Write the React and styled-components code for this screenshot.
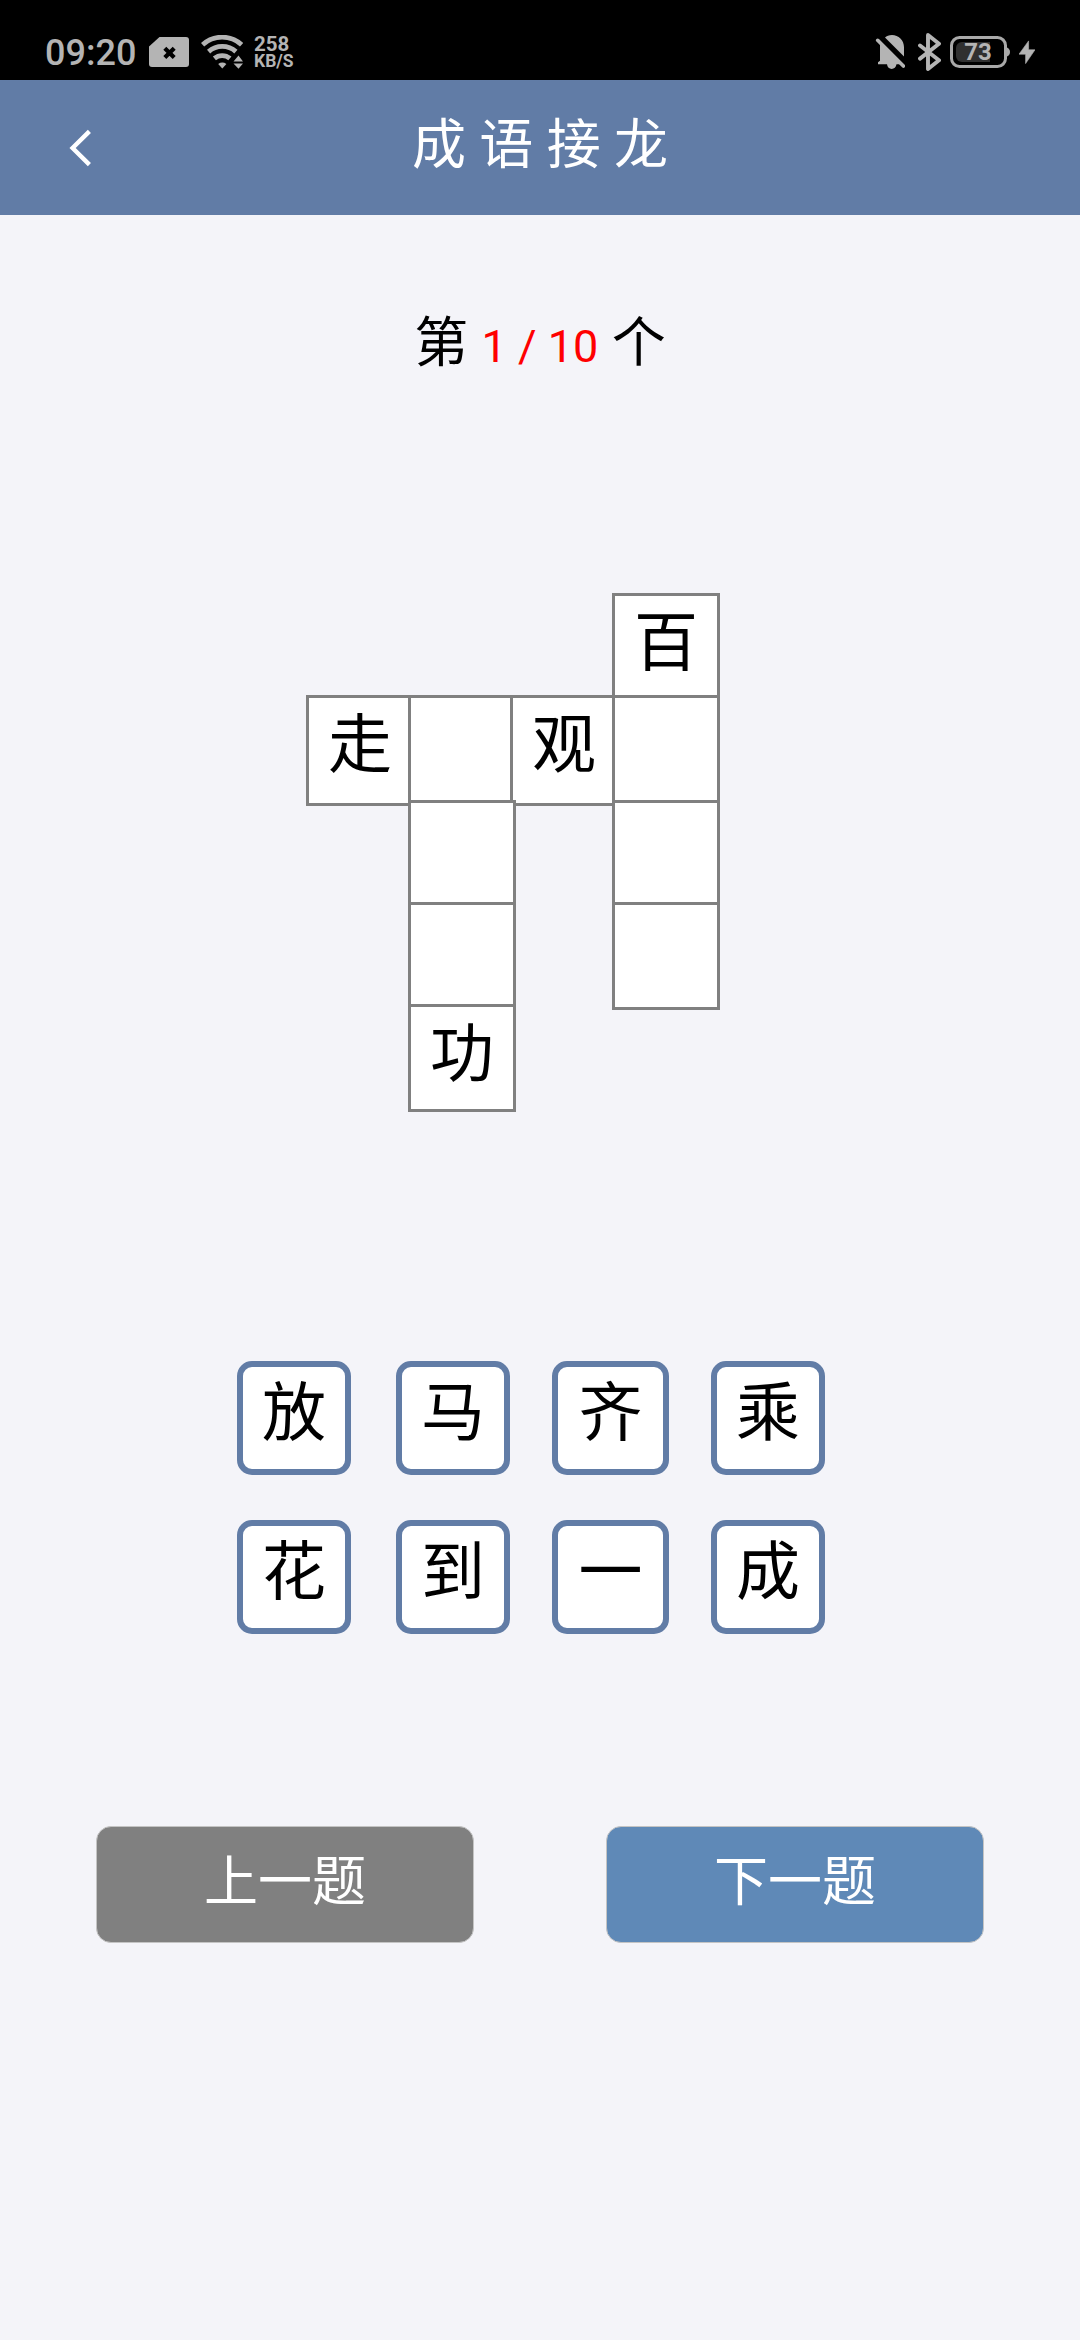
import React from "react";
import styled, { createGlobalStyle } from "styled-components";

const Global = createGlobalStyle`
  html, body { margin: 0; background: #f4f4f9; }
  * { box-sizing: border-box; }
  body { font-family: Roboto, "Noto Sans CJK SC", sans-serif; color: #000; }
  svg { display: block; flex: none; }
`;

const Screen = styled.div`
  width: 1080px;
  height: 2340px;
  display: flex;
  flex-direction: column;
  background: #f4f4f9;
  overflow: hidden;
`;

const StatusBar = styled.div`
  height: 80px;
  padding: 24px 45px 0 45px;
  display: flex;
  justify-content: space-between;
  align-items: center;
  background: #000;
  color: #b4b4b4;
`;

const StatusGroup = styled.div`
  display: flex;
  align-items: center;
  height: 56px;
`;

const Clock = styled.span`
  width: 104px;
  padding-top: 2px;
  font-size: 36px;
  font-weight: 500;
  line-height: 42px;
`;

const Speed = styled.div`
  margin-left: 11px;
  padding-top: 1px;
  font-weight: 700;
`;

const SpeedValue = styled.div`
  font-size: 20.5px;
  line-height: 17px;
`;

const SpeedUnit = styled.div`
  font-size: 17.5px;
  line-height: 16px;
`;

const Header = styled.header`
  height: 135px;
  display: grid;
  grid-template-columns: 162px 1fr 162px;
  align-items: center;
  background: #617ca6;
  color: #fff;
`;

const BackButton = styled.button`
  border: 0;
  padding: 0 0 0 68px;
  background: none;
`;

const Title = styled.h1`
  margin: 0;
  padding-bottom: 3px;
  font-size: 54px;
  font-weight: 400;
  line-height: 64px;
  text-align: center;
`;

const Counter = styled.p`
  margin: 97px 0 0;
  height: 64px;
  font-size: 54px;
  line-height: 64px;
  text-align: center;
`;

const Progress = styled.span`
  color: #f00;
  font-size: 45px;
  line-height: 1;
`;

const Board = styled.div`
  margin: 217px 0 0 306px;
  display: grid;
  grid-template-columns: repeat(4, 102px);
  grid-template-rows: 102px 105px 102px 102px 108px;
`;

const Cell = styled.div`
  grid-column: ${(p) => p.$col};
  grid-row: ${(p) => p.$row};
  width: 108px;
  height: ${(p) => (p.$row === 2 ? 111 : 108)}px;
  border: 3px solid #808080;
  background: #fff;
  font-size: 64px;
  line-height: 96px;
  text-align: center;
`;

const Tiles = styled.div`
  margin: 249px 0 0 237px;
  display: grid;
  grid-template-columns: 159px 156px 159px 114px;
  row-gap: 45px;
`;

const Tile = styled.button`
  width: ${(p) => (p.$wide ? 117 : 114)}px;
  height: 114px;
  padding: 0 0 8px;
  border: 6px solid #617ca6;
  border-radius: 15px;
  background: #fff;
  color: #000;
  font: 400 64px/90px Roboto, "Noto Sans CJK SC", sans-serif;
`;

const Actions = styled.div`
  margin-top: 192px;
  padding: 0 96px;
  display: flex;
  justify-content: space-between;
`;

const ActionButton = styled.button`
  width: 378px;
  height: 117px;
  padding: 0 0 3px;
  border: 1px solid #c4c4c4;
  border-radius: 15px;
  background: ${(p) => (p.$primary ? "#5f89b7" : "#808080")};
  color: #fff;
  font: 400 54px/64px Roboto, "Noto Sans CJK SC", sans-serif;
`;

const BatteryIcon = styled.div`
  position: relative;
  width: 60px;
  height: 32px;
  margin-left: 9px;
`;

const BatteryText = styled.span`
  position: absolute;
  left: 0;
  top: 0;
  width: 56px;
  font-size: 24px;
  font-weight: 700;
  line-height: 32px;
  text-align: center;
`;

const IconSlot = styled.span`
  margin-left: ${(p) => p.$gap || 0}px;
`;

const SimIcon = () => (
  <svg width="40" height="30" viewBox="0 0 40 30">
    <path d="M10.5 0H37a3 3 0 0 1 3 3v24a3 3 0 0 1-3 3H3a3 3 0 0 1-3-3V9.5z" fill="#b4b4b4" />
    <path d="M15.8 11.2l9.4 9.4M25.2 11.2l-9.4 9.4" stroke="#000" strokeWidth="4.2" />
  </svg>
);

const WifiIcon = () => (
  <svg width="42" height="34" viewBox="0 0 42 34">
    <g fill="none" stroke="#b4b4b4" strokeWidth="4.8">
      <path d="M1.6 9.7A29 29 0 0 1 40.6 9.7" />
      <path d="M7.6 16.6A20.5 20.5 0 0 1 34.9 16.6" />
      <path d="M13.4 23.4A12 12 0 0 1 28.9 23.4" />
    </g>
    <path d="M17.2 29Q21.3 26.2 25.4 29L21.3 33.5z" fill="#b4b4b4" />
    <path d="M32.5 26.5L37.5 20.5L42 26.5zM32.5 28.6H42L37.5 33.8z" fill="#b4b4b4" />
  </svg>
);

const BellOffIcon = () => (
  <svg width="30" height="36" viewBox="0 0 30 36">
    <path
      d="M10 3.6C11.5 2 14 1 17 1C23.5 1 29 6.2 29 13.2V22.6zM5 9V26.8L3 28.2V30.2H12C12.3 33 14.3 34.9 16.7 34.9S21 33 21.5 30.2H26.5z"
      fill="#b4b4b4"
    />
    <path d="M2.7 6.3L28.4 32" stroke="#b4b4b4" strokeWidth="3.6" strokeLinecap="round" />
  </svg>
);

const BluetoothIcon = () => (
  <svg width="24" height="38" viewBox="0 0 24 38">
    <path
      d="M3 12.5L22 27.3L11 36V2L22 10.7L3 25.6"
      fill="none"
      stroke="#b4b4b4"
      strokeWidth="3.9"
      strokeLinecap="round"
      strokeLinejoin="round"
    />
  </svg>
);

const BoltIcon = () => (
  <svg width="16" height="24" viewBox="0 0 16 24">
    <path d="M9.6.9V9.8H16L6.6 23.6V14.2H0z" fill="#b4b4b4" stroke="#b4b4b4" strokeWidth=".6" />
  </svg>
);

const Battery = () => (
  <BatteryIcon>
    <svg width="60" height="32" viewBox="0 0 60 32">
      <path d="M12 6H40V26H12a6 6 0 0 1-6-6V12a6 6 0 0 1 6-6z" fill="#303030" />
      <rect x="1.5" y="1.5" width="54" height="29" rx="8" fill="none" stroke="#a9a9a9" strokeWidth="3" />
      <path d="M57 11.5Q60 13 60 16T57 20.5z" fill="#a9a9a9" />
    </svg>
    <BatteryText>73</BatteryText>
  </BatteryIcon>
);

const BackIcon = () => (
  <svg width="26" height="40" viewBox="0 0 26 40">
    <path d="M21.4 3.4L4.6 20L21.4 36.6" fill="none" stroke="#fff" strokeWidth="4.4" />
  </svg>
);

const CELLS = [
  { row: 1, col: 4, char: "百" },
  { row: 2, col: 1, char: "走" },
  { row: 2, col: 2 },
  { row: 2, col: 3, char: "观" },
  { row: 2, col: 4 },
  { row: 3, col: 2 },
  { row: 3, col: 4 },
  { row: 4, col: 2 },
  { row: 4, col: 4 },
  { row: 5, col: 2, char: "功" },
];

const CHOICES = ["放", "马", "齐", "乘", "花", "到", "一", "成"];

export default function App() {
  return (
    <Screen>
      <Global />
      <StatusBar>
        <StatusGroup>
          <Clock>09:20</Clock>
          <SimIcon />
          <IconSlot $gap={12}>
            <WifiIcon />
          </IconSlot>
          <Speed>
            <SpeedValue>258</SpeedValue>
            <SpeedUnit>KB/S</SpeedUnit>
          </Speed>
        </StatusGroup>
        <StatusGroup>
          <BellOffIcon />
          <IconSlot $gap={12}>
            <BluetoothIcon />
          </IconSlot>
          <Battery />
          <IconSlot $gap={9}>
            <BoltIcon />
          </IconSlot>
        </StatusGroup>
      </StatusBar>
      <Header>
        <BackButton aria-label="返回">
          <BackIcon />
        </BackButton>
        <Title>成 语 接 龙</Title>
      </Header>
      <Counter>
        第 <Progress>1 / 10</Progress> 个
      </Counter>
      <Board>
        {CELLS.map((cell) => (
          <Cell key={`${cell.row}-${cell.col}`} $row={cell.row} $col={cell.col}>
            {cell.char}
          </Cell>
        ))}
      </Board>
      <Tiles>
        {CHOICES.map((char, i) => (
          <Tile key={char} $wide={i % 4 === 2}>
            {char}
          </Tile>
        ))}
      </Tiles>
      <Actions>
        <ActionButton>上一题</ActionButton>
        <ActionButton $primary>下一题</ActionButton>
      </Actions>
    </Screen>
  );
}
